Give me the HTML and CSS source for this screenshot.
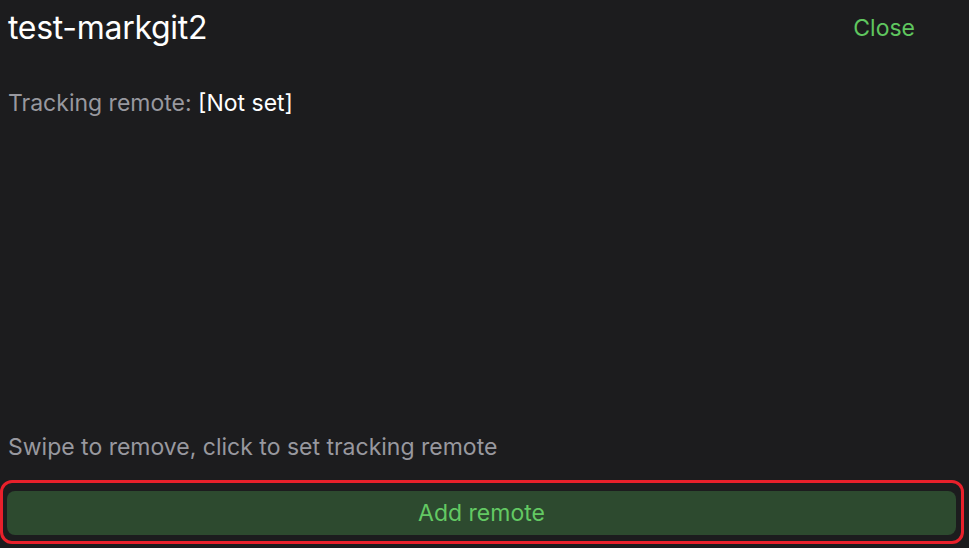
FILE: index.html
```html
<!DOCTYPE html>
<html lang="en">
  <head>
    <meta charset="UTF-8" />
    <meta name="viewport" content="width=device-width, initial-scale=1.0" />
    <title>Remotes</title>
    <link rel="stylesheet" href="styles.css">
  </head>
  <body>
    <div class="sheet">
      <div class="header">
        <h1 class="repoName">test-markgit2</h1>
        <button class="btnLink">Close</button>
      </div>
      <p class="tracking">Tracking remote: <span class="trackingVal">[Not set]</span></p>

      <div class="remoteList"></div>

      <p class="hint">Swipe to remove, click to set tracking remote</p>
      <div class="addWrap">
        <button class="btnAdd">Add remote</button>
      </div>
    </div>
  </body>
</html>
```

FILE: styles.css
```css
html,
body {
  margin: 0;
  height: 100%;
  background-color: #1c1c1e;
  font-family: Inter, "Liberation Sans", sans-serif;
}
.sheet {
  height: 100%;
  display: flex;
  flex-direction: column;
  box-sizing: border-box;
}
.header {
  display: flex;
  justify-content: space-between;
  align-items: center;
  padding: 8px 54px 0 8px;
}
.repoName {
  margin: 0;
  font-size: 32px;
  font-weight: 400;
  color: #ffffff;
  letter-spacing: -0.3px;
}
.btnLink {
  background: transparent;
  border: none;
  padding: 0;
  font-family: inherit;
  font-size: 23px;
  color: #5fc65f;
  cursor: pointer;
}
.tracking {
  margin: 42px 0 0 8px;
  font-size: 23px;
  color: #98989f;
}
.trackingVal {
  color: #ffffff;
}
.remoteList {
  flex: 1;
}
.hint {
  margin: 0 0 19px 8px;
  font-size: 23px;
  color: #98989f;
}
.addWrap {
  margin: 0 5px 4px 0;
  padding: 8px 5px 6px 4px;
  border: 3px solid #e8202b;
  border-radius: 12px;
}
.btnAdd {
  display: block;
  width: 100%;
  height: 44px;
  background-color: #2d4a2f;
  border: none;
  border-radius: 8px;
  font-family: inherit;
  font-size: 23px;
  color: #63c963;
  cursor: pointer;
}
```
